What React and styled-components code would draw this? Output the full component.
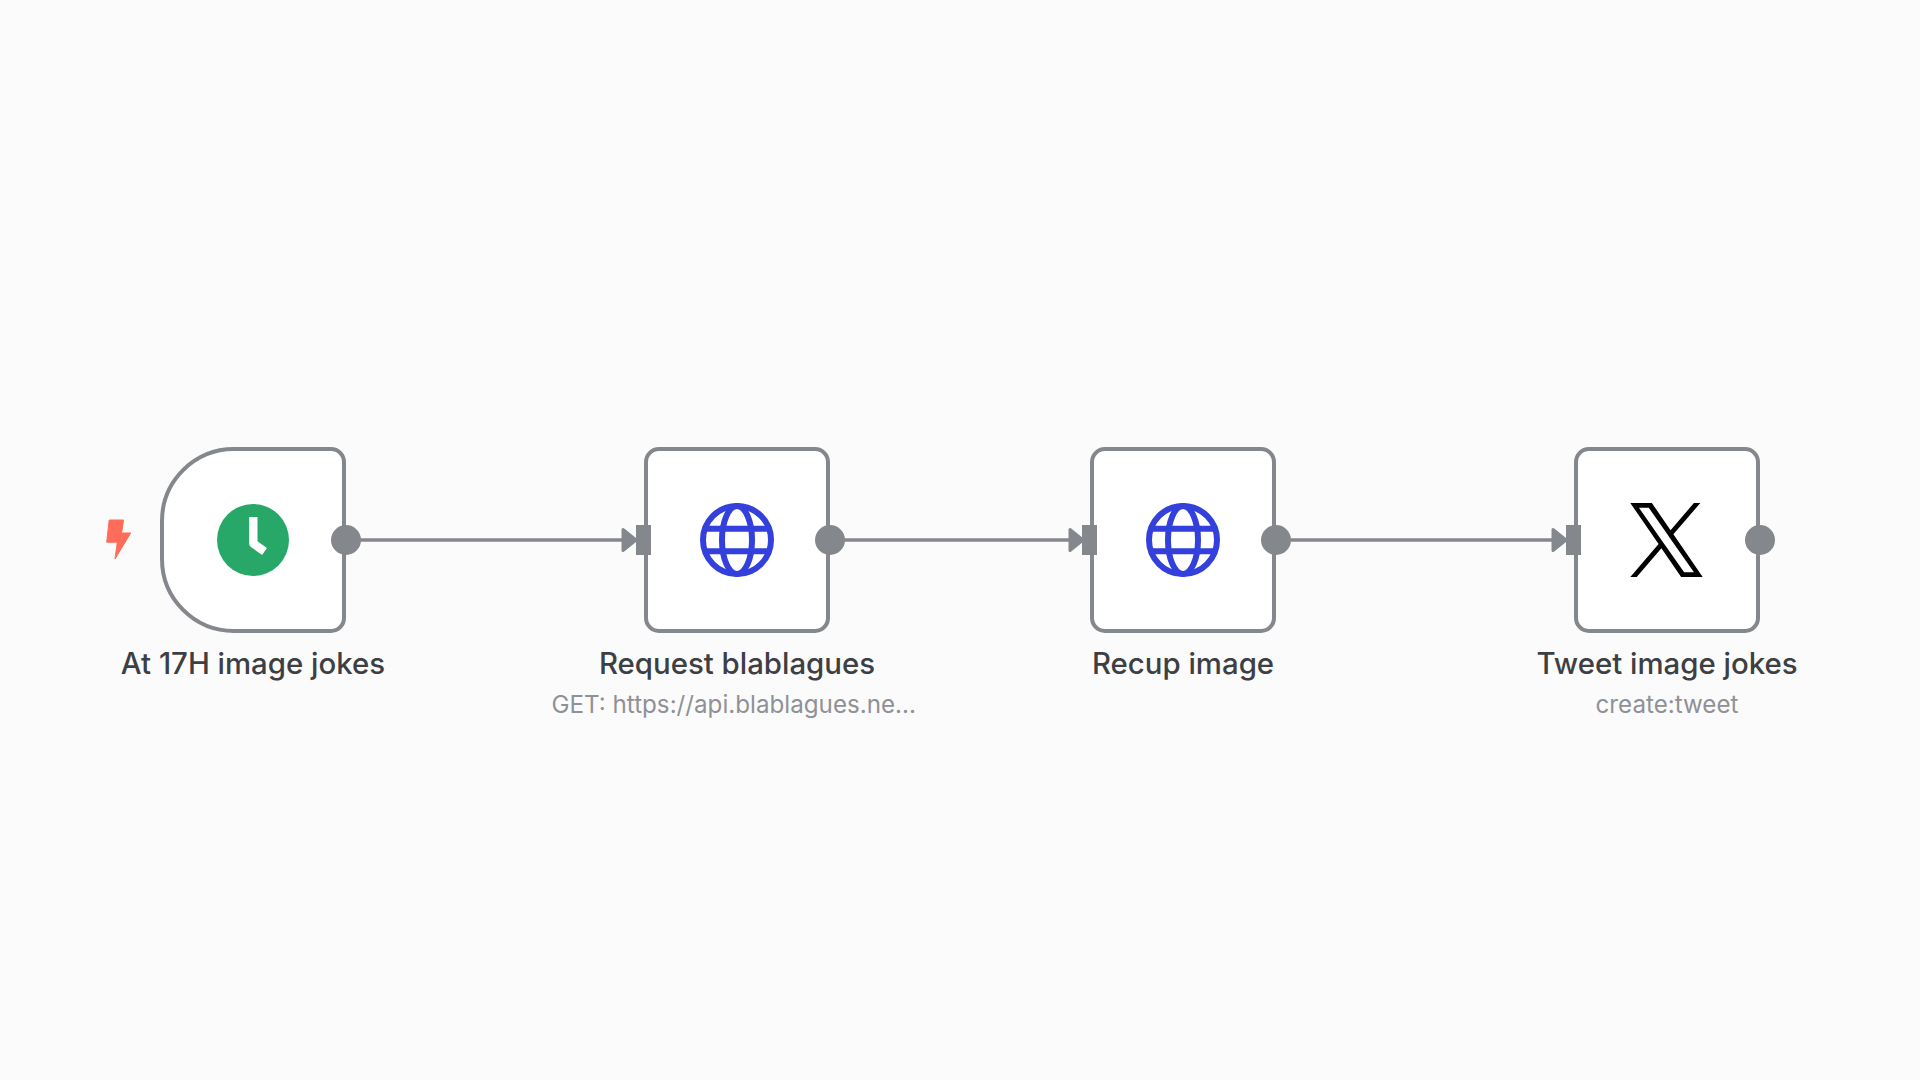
import styled, { createGlobalStyle } from "styled-components";

const GlobalStyle = createGlobalStyle`
    html, body {
        margin: 0;
        padding: 0;
        background: #fbfbfb;
        font-family: "Inter", "Liberation Sans", sans-serif;
    }
`;

const Canvas = styled.div`
    position: relative;
    width: 100%;
    height: 100vh;
    overflow: hidden;
    background: #fbfbfb;
`;

const Edges = styled.svg`
    position: absolute;
    inset: 0;
    width: 100%;
    height: 100%;
`;

const NodeWrap = styled.div`
    position: absolute;
    top: 447px;
    left: ${(p) => p.$x}px;
    width: 186px;
    display: flex;
    flex-direction: column;
    align-items: center;
`;

const NodeBox = styled.div`
    position: relative;
    width: 186px;
    height: 186px;
    box-sizing: border-box;
    display: flex;
    align-items: center;
    justify-content: center;
    background: #fff;
    border: 4px solid #84878b;
    border-radius: ${(p) => (p.$trigger ? "74px 15px 15px 74px" : "15px")};
`;

const OutputDot = styled.span`
    position: absolute;
    top: 50%;
    right: -18.5px;
    width: 30px;
    height: 30px;
    margin-top: -15px;
    border-radius: 50%;
    background: #84878b;
`;

const InputHandle = styled.span`
    position: absolute;
    top: 50%;
    left: -12.5px;
    width: 15px;
    height: 30px;
    margin-top: -15px;
    background: #84878b;
`;

const TriggerBolt = styled.svg`
    position: absolute;
    left: -58px;
    top: 50%;
    margin-top: -21px;
    width: 26px;
    height: 41px;
`;

const Label = styled.div`
    margin-top: 12px;
    font-size: 29.4px;
    line-height: 38px;
    font-weight: 500;
    color: #3d3f44;
    white-space: nowrap;
`;

const SubLabel = styled.div`
    margin-top: 7px;
    font-size: 24.2px;
    line-height: 30px;
    color: #8f9196;
    white-space: nowrap;
    margin-left: ${(p) => p.$shift || 0}px;
`;

const XMark = styled.svg`
    margin-right: 2px;
`;

function ClockIcon() {
    return (
        <svg width="72" height="72" viewBox="0 0 72 72">
            <circle cx="36" cy="36" r="36" fill="#27a768" />
            <path d="M36.3 13 V39.5 L47.5 47.5" fill="none" stroke="#fff" strokeWidth="8.4" strokeLinejoin="round" />
        </svg>
    );
}

function GlobeIcon() {
    return (
        <svg width="74" height="74" viewBox="0 0 74 74" fill="none" stroke="#3340dc" strokeWidth="6">
            <circle cx="37" cy="37" r="34" />
            <ellipse cx="37" cy="37" rx="15" ry="34" />
            <path d="M6 25.7 H68 M6 48.3 H68" />
        </svg>
    );
}

function XIcon() {
    return (
        <XMark width="73" height="74" viewBox="0 0 1200 1227" fill="#000">
            <path d="M714.163 519.284L1160.89 0H1055.03L667.137 450.887L357.328 0H0L468.492 681.821L0 1226.37H105.866L515.491 750.218L842.672 1226.37H1200L714.137 519.284H714.163ZM569.165 687.828L521.697 619.934L144.011 79.6944H306.615L611.412 515.685L658.88 583.579L1055.08 1150.3H892.476L569.165 687.854V687.828Z" />
        </XMark>
    );
}

const nodes = [
    { x: 160, label: "At 17H image jokes", trigger: true, icon: <ClockIcon /> },
    { x: 644, label: "Request blablagues", sub: "GET: https://api.blablagues.ne...", shift: -6.5, icon: <GlobeIcon /> },
    { x: 1090, label: "Recup image", icon: <GlobeIcon /> },
    { x: 1574, label: "Tweet image jokes", sub: "create:tweet", icon: <XIcon /> },
];

// from = output dot x, to = input handle x
const edges = [
    { from: 360, to: 636 },
    { from: 844, to: 1083 },
    { from: 1291, to: 1566 },
];

function App() {
    return (
        <Canvas>
            <GlobalStyle />
            {nodes.map((node) => (
                <NodeWrap key={node.label} $x={node.x}>
                    <NodeBox $trigger={node.trigger}>
                        {node.trigger && (
                            <TriggerBolt viewBox="0 0 26 41">
                                <path
                                    d="M3.2 1 H17.5 L15.6 14 H24.7 L9 40 L11.3 23.2 H0.7 Z"
                                    fill="#ff6d5a"
                                    stroke="#ff6d5a"
                                    strokeWidth="1"
                                    strokeLinejoin="round"
                                />
                            </TriggerBolt>
                        )}
                        {node.icon}
                        {!node.trigger && <InputHandle />}
                        <OutputDot />
                    </NodeBox>
                    <Label>{node.label}</Label>
                    {node.sub && <SubLabel $shift={node.shift}>{node.sub}</SubLabel>}
                </NodeWrap>
            ))}
            <Edges viewBox="0 0 1920 1080">
                {edges.map((edge) => (
                    <g key={edge.from} fill="#84878b" stroke="#84878b">
                        <path d={`M${edge.from} 540 H${edge.to - 8}`} strokeWidth="3.6" fill="none" />
                        <path
                            d={`M${edge.to - 13} 529.5 L${edge.to} 540 L${edge.to - 13} 550.5 Z`}
                            strokeWidth="3"
                            strokeLinejoin="round"
                        />
                    </g>
                ))}
            </Edges>
        </Canvas>
    );
}

export default App;
